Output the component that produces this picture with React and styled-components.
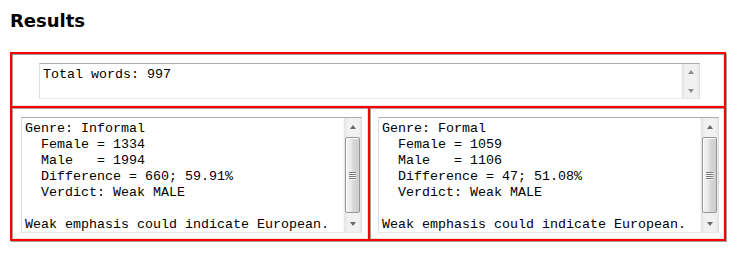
import React from 'react'
import styled, { createGlobalStyle } from 'styled-components'

const GlobalStyle = createGlobalStyle`
    body {
        margin: 0;
        background: #ffffff;
    }
`

const results = [
    {
        genre: 'Informal',
        female: 1334,
        male: 1994,
        diff: '660; 59.91%',
        verdict: 'Weak MALE',
    },
    {
        genre: 'Formal',
        female: 1059,
        male: 1106,
        diff: '47; 51.08%',
        verdict: 'Weak MALE',
    },
]

const Page = styled.div`
    padding: 10px;
`

const Title = styled.h2`
    margin: 0 0 21px 0;
    font-family: 'DejaVu Sans', Verdana, sans-serif;
    font-weight: bold;
    font-size: 18px;
    line-height: 21px;
    color: #000;
`

const ResultsGrid = styled.div`
    display: grid;
    grid-template-columns: 358px 356px;
    width: fit-content;
    border-top: 2px solid #ff0000;
    border-left: 2px solid #ff0000;
    box-shadow: 1px 1px 0 #a0a0a0;
`

const Cell = styled.div`
    grid-column: ${(props) => (props.wide ? '1 / span 2' : 'auto')};
    border-right: 2px solid #ff0000;
    border-bottom: 2px solid #ff0000;
    padding: ${(props) => props.pad};
    box-shadow: inset 1px 1px 0 #a0a0a0, inset -1px -1px 0 #e6e6e6;
    display: flex;
`

const TextBox = styled.div`
    display: flex;
    width: ${(props) => props.w}px;
    height: ${(props) => props.h}px;
    box-sizing: border-box;
    border: 1px solid #dbdfe6;
    border-top-color: #abadb3;
    border-bottom-color: #e3e9ef;
    background: #ffffff;
`

const TextContent = styled.pre`
    flex: 1;
    margin: 0;
    padding: 3px 3px 0 3px;
    overflow: hidden;
    font-family: 'Liberation Mono', 'Courier New', monospace;
    font-size: 13.33px;
    line-height: 16px;
    color: #000;
    white-space: pre;
`

const Scrollbar = styled.div`
    width: 17px;
    display: flex;
    flex-direction: column;
    background: linear-gradient(to right, #e4e4e4, #f1f1f1 25%, #f1f1f1 80%, #e9e9e9);
    border-left: 1px solid #f7f7f7;
`

const ArrowButton = styled.div`
    height: 17px;
    display: flex;
    align-items: center;
    justify-content: center;
`

const Arrow = styled.span`
    width: 0;
    height: 0;
    border-left: 3.5px solid transparent;
    border-right: 3.5px solid transparent;
    border-${(props) => (props.down ? 'top' : 'bottom')}: 4px solid #6a6a6a;
    opacity: ${(props) => (props.dim ? 0.75 : 1)};
`

const Track = styled.div`
    flex: 1;
    display: flex;
    padding: 2px 1px 2px 1px;
`

const Thumb = styled.div`
    flex: 1;
    display: flex;
    flex-direction: column;
    align-items: center;
    justify-content: center;
    gap: 1px;
    border: 1px solid #979797;
    border-radius: 2px;
    background: linear-gradient(to right, #f4f4f4, #e6e6e6 45%, #d6d6d6 55%, #cfcfcf);
    box-shadow: inset 1px 1px 0 #ffffff;
`

const Grip = styled.span`
    width: 7px;
    height: 1px;
    background: #7a7a7a;
    box-shadow: 0 1px 0 #f6f6f6;
`

const ScrollArea = ({ thumb, dim }) => (
    <Scrollbar>
        <ArrowButton><Arrow dim={dim} /></ArrowButton>
        <Track>
            {thumb && (
                <Thumb>
                    <Grip />
                    <Grip />
                    <Grip />
                    <Grip />
                </Thumb>
            )}
        </Track>
        <ArrowButton><Arrow down dim={dim} /></ArrowButton>
    </Scrollbar>
)

const formatResult = (r) =>
    `Genre: ${r.genre}
  Female = ${r.female}
  Male   = ${r.male}
  Difference = ${r.diff}
  Verdict: ${r.verdict}

Weak emphasis could indicate European.`

export default function App() {
    return (
        <Page>
            <GlobalStyle />
            <Title>Results</Title>
            <ResultsGrid>
                <Cell wide pad="9px 0 7px 27px">
                    <TextBox w={661} h={36}>
                        <TextContent>Total words: 997</TextContent>
                        <ScrollArea dim />
                    </TextBox>
                </Cell>
                {results.map((r, i) => (
                    <Cell key={r.genre} pad={i === 0 ? '9px 0 6px 9px' : '9px 0 6px 8px'}>
                        <TextBox w={341} h={116}>
                            <TextContent>{formatResult(r)}</TextContent>
                            <ScrollArea thumb />
                        </TextBox>
                    </Cell>
                ))}
            </ResultsGrid>
        </Page>
    )
}
